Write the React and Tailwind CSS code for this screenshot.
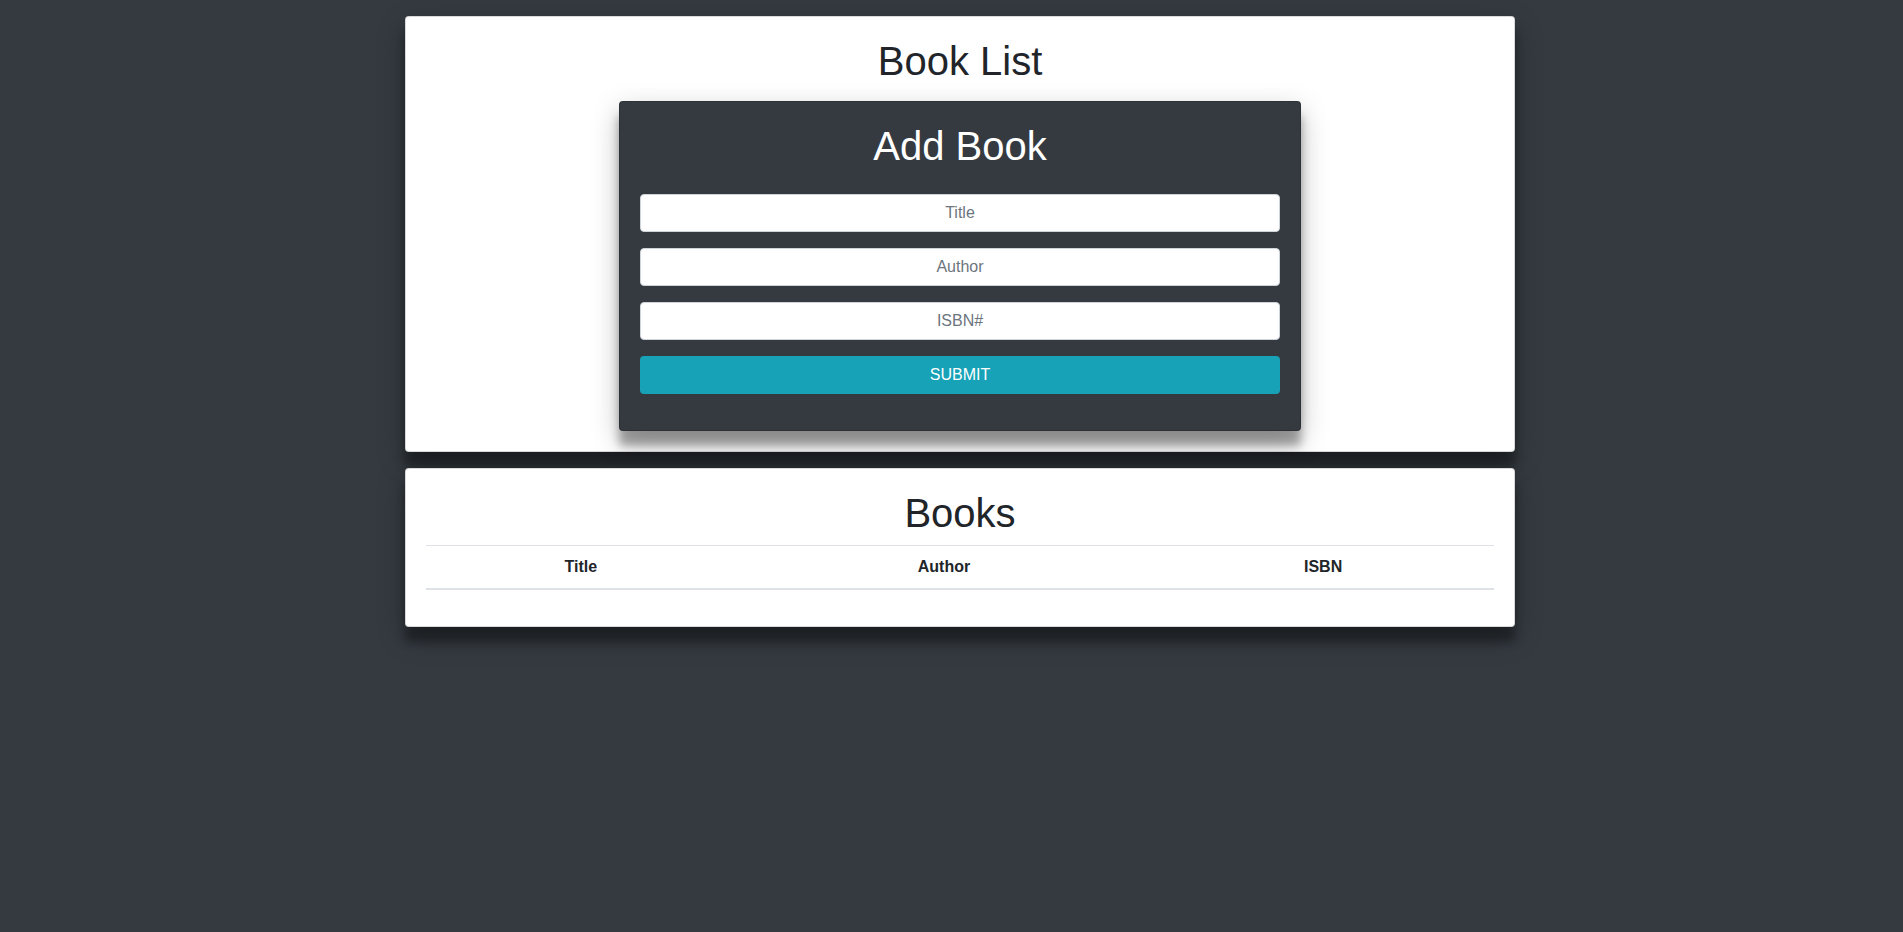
import { useState } from "react";

const FIELDS = [
  { name: "title", placeholder: "Title" },
  { name: "author", placeholder: "Author" },
  { name: "isbn", placeholder: "ISBN#" },
];

function Card({ className, children }) {
  return (
    <section
      className={`rounded border border-black/15 p-5 text-center shadow-[0_10px_28px_rgba(0,0,0,0.25),0_15px_10px_rgba(0,0,0,0.32)] ${className}`}
    >
      {children}
    </section>
  );
}

function AddBookForm({ onAdd }) {
  const handleSubmit = (event) => {
    event.preventDefault();
    onAdd(Object.fromEntries(new FormData(event.currentTarget)));
    event.currentTarget.reset();
  };

  return (
    <form onSubmit={handleSubmit} className="mt-6 mb-4 flex flex-col gap-4">
      {FIELDS.map((field) => (
        <input
          key={field.name}
          type="text"
          name={field.name}
          aria-label={field.placeholder}
          placeholder={field.placeholder}
          className="h-[38px] w-full rounded border border-[#ced4da] bg-white px-3 text-center text-[#495057] placeholder:text-[#6c757d]"
        />
      ))}
      <button type="submit" className="h-[38px] w-full rounded bg-[#17a2b8] px-3 text-white">
        SUBMIT
      </button>
    </form>
  );
}

function BookTable({ books }) {
  return (
    <table className="mt-2 mb-4 w-full table-fixed border-separate border-spacing-0">
      <thead>
        <tr>
          <th className="w-[29%] border-t border-b-2 border-[#dee2e6] py-[9px]">Title</th>
          <th className="w-[39%] border-t border-b-2 border-[#dee2e6] py-[9px]">Author</th>
          <th className="w-[32%] border-t border-b-2 border-[#dee2e6] py-[9px]">ISBN</th>
        </tr>
      </thead>
      <tbody>
        {books.map((book, index) => (
          <tr key={index}>
            <td className="py-2">{book.title}</td>
            <td className="py-2">{book.author}</td>
            <td className="py-2">{book.isbn}</td>
          </tr>
        ))}
      </tbody>
    </table>
  );
}

export default function App() {
  const [books, setBooks] = useState([]);

  return (
    <div className="min-h-screen bg-[#343a40] py-4 pl-[17px] font-['Liberation_Sans',Arial,sans-serif] text-base text-[#212529]">
      <main className="mx-auto flex max-w-[1110px] flex-col gap-4">
        <Card className="bg-white">
          <h1 className="mb-4 text-[40px] leading-[48px]">Book List</h1>
          <Card className="mx-auto max-w-[682px] bg-[#343a40] text-white">
            <h2 className="text-[40px] leading-[48px]">Add Book</h2>
            <AddBookForm onAdd={(book) => setBooks([...books, book])} />
          </Card>
        </Card>
        <Card className="bg-white">
          <h2 className="text-[40px] leading-[48px]">Books</h2>
          <BookTable books={books} />
        </Card>
      </main>
    </div>
  );
}
